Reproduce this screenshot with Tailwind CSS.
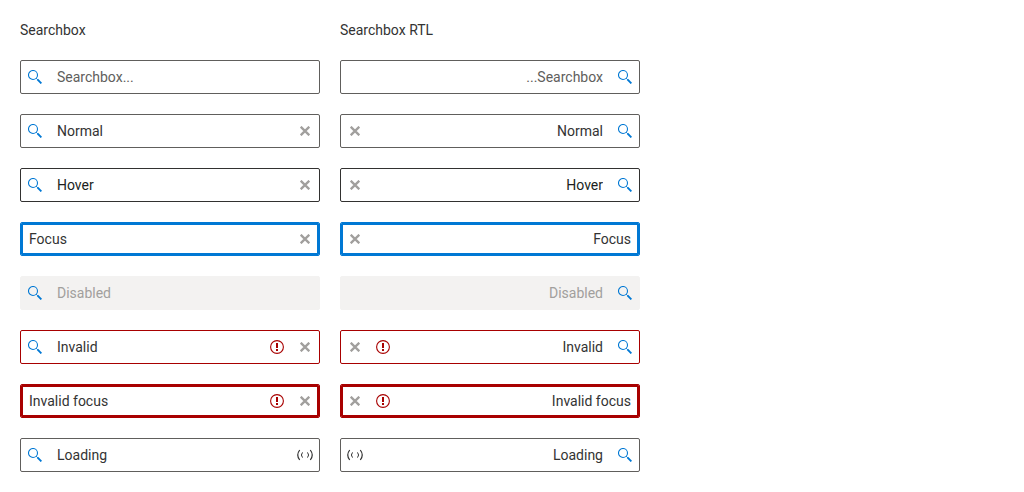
<!DOCTYPE html>
<html lang="en">
<head>
<meta charset="utf-8">
<meta name="viewport" content="width=device-width, initial-scale=1">
<title>Searchbox</title>
<script src="https://cdn.jsdelivr.net/npm/@tailwindcss/browser@4"></script>
</head>
<body class="bg-white font-['Roboto',sans-serif] text-sm text-[#333333]">
<svg class="hidden" aria-hidden="true">
  <symbol id="search" viewBox="0 0 14 14"><circle cx="5" cy="5" r="4.5" fill="none" stroke="currentColor" stroke-width="1.1"/><path d="M8.200 8.200l1.500 1.500" stroke="currentColor" stroke-width="1"/><path d="M9.400 9.400l4 4" stroke="currentColor" stroke-width="1.900"/></symbol>
  <symbol id="clear" viewBox="0 0 10 10"><path d="M.7.7l8.6 8.6M9.3.7L.7 9.3" stroke="currentColor" stroke-width="2.300"/></symbol>
  <symbol id="alert" viewBox="0 0 14 14"><circle cx="7" cy="7" r="6.4" fill="none" stroke="currentColor" stroke-width="1.1"/><path d="M6 3h2v5H6zM6 9h2v2H6z" fill="currentColor"/></symbol>
  <symbol id="loading" viewBox="0 0 18 12"><g fill="none" stroke="currentColor"><path stroke-width="1.200" d="M3.700 1Q-.2 6 3.700 11M14.300 1Q18.200 6 14.300 11"/><path stroke-width="1" d="M6.500 3.400Q4.300 6 6.500 8.600M11.500 3.400Q13.700 6 11.500 8.600"/></g></symbol>
</svg>
<main class="grid max-w-[660px] grid-cols-2 gap-5 p-5">
  <section class="flex flex-col gap-5">
    <h2>Searchbox</h2>
    <div class="flex h-[34px] items-center rounded-[2px] border border-[#605e5c]">
      <span class="flex w-7 shrink-0 justify-center text-[#0078d4]"><svg class="size-3.5"><use href="#search"/></svg></span>
      <input type="text" aria-label="Empty" placeholder="Searchbox..." class="min-w-0 flex-1 px-2 outline-none placeholder:text-[#605e5c]">
    </div>
    <div class="flex h-[34px] items-center rounded-[2px] border border-[#605e5c]">
      <span class="flex w-7 shrink-0 justify-center text-[#0078d4]"><svg class="size-3.5"><use href="#search"/></svg></span>
      <input type="text" aria-label="Normal" value="Normal" class="min-w-0 flex-1 px-2 outline-none">
      <button aria-label="Clear" class="flex w-7 shrink-0 justify-center text-[#a19f9d]"><svg class="size-2.5"><use href="#clear"/></svg></button>
    </div>
    <div class="flex h-[34px] items-center rounded-[2px] border border-[#323130]">
      <span class="flex w-7 shrink-0 justify-center text-[#0078d4]"><svg class="size-3.5"><use href="#search"/></svg></span>
      <input type="text" aria-label="Hover" value="Hover" class="min-w-0 flex-1 px-2 text-[#201f1e] outline-none">
      <button aria-label="Clear" class="flex w-7 shrink-0 justify-center text-[#a19f9d]"><svg class="size-2.5"><use href="#clear"/></svg></button>
    </div>
    <div class="flex h-[34px] items-center rounded-[2px] border border-[#0078d4] inset-ring-2 inset-ring-[#0078d4]">
      <input type="text" aria-label="Focus" value="Focus" class="min-w-0 flex-1 px-2 outline-none">
      <button aria-label="Clear" class="flex w-7 shrink-0 justify-center text-[#a19f9d]"><svg class="size-2.5"><use href="#clear"/></svg></button>
    </div>
    <div class="flex h-[34px] items-center rounded-[2px] border border-[#f3f2f1] bg-[#f3f2f1]">
      <span class="flex w-7 shrink-0 justify-center text-[#0078d4]"><svg class="size-3.5"><use href="#search"/></svg></span>
      <input type="text" disabled aria-label="Disabled" value="Disabled" class="min-w-0 flex-1 px-2 text-[#a19f9d] outline-none">
    </div>
    <div class="flex h-[34px] items-center rounded-[2px] border border-[#a80000]">
      <span class="flex w-7 shrink-0 justify-center text-[#0078d4]"><svg class="size-3.5"><use href="#search"/></svg></span>
      <input type="text" aria-invalid="true" aria-label="Invalid" value="Invalid" class="min-w-0 flex-1 px-2 outline-none">
      <span class="flex w-7 shrink-0 justify-center text-[#a80000]"><svg class="size-3.5"><use href="#alert"/></svg></span>
      <button aria-label="Clear" class="flex w-7 shrink-0 justify-center text-[#a19f9d]"><svg class="size-2.5"><use href="#clear"/></svg></button>
    </div>
    <div class="flex h-[34px] items-center rounded-[2px] border border-[#a80000] inset-ring-2 inset-ring-[#a80000]">
      <input type="text" aria-invalid="true" aria-label="Invalid focus" value="Invalid focus" class="min-w-0 flex-1 px-2 outline-none">
      <span class="flex w-7 shrink-0 justify-center text-[#a80000]"><svg class="size-3.5"><use href="#alert"/></svg></span>
      <button aria-label="Clear" class="flex w-7 shrink-0 justify-center text-[#a19f9d]"><svg class="size-2.5"><use href="#clear"/></svg></button>
    </div>
    <div class="flex h-[34px] items-center rounded-[2px] border border-[#605e5c]">
      <span class="flex w-7 shrink-0 justify-center text-[#0078d4]"><svg class="size-3.5"><use href="#search"/></svg></span>
      <input type="text" aria-label="Loading" value="Loading" class="min-w-0 flex-1 px-2 outline-none">
      <span class="flex w-7 shrink-0 justify-center"><svg class="h-3 w-[18px]"><use href="#loading"/></svg></span>
    </div>
  </section>
  <section class="flex flex-col gap-5">
    <h2>Searchbox RTL</h2>
    <div dir="rtl" class="flex h-[34px] items-center rounded-[2px] border border-[#605e5c]">
      <span class="flex w-7 shrink-0 justify-center text-[#0078d4]"><svg class="size-3.5"><use href="#search"/></svg></span>
      <input type="text" aria-label="Empty" placeholder="Searchbox..." class="min-w-0 flex-1 px-2 outline-none placeholder:text-[#605e5c]">
    </div>
    <div dir="rtl" class="flex h-[34px] items-center rounded-[2px] border border-[#605e5c]">
      <span class="flex w-7 shrink-0 justify-center text-[#0078d4]"><svg class="size-3.5"><use href="#search"/></svg></span>
      <input type="text" aria-label="Normal" value="Normal" class="min-w-0 flex-1 px-2 outline-none">
      <button aria-label="Clear" class="flex w-7 shrink-0 justify-center text-[#a19f9d]"><svg class="size-2.5"><use href="#clear"/></svg></button>
    </div>
    <div dir="rtl" class="flex h-[34px] items-center rounded-[2px] border border-[#323130]">
      <span class="flex w-7 shrink-0 justify-center text-[#0078d4]"><svg class="size-3.5"><use href="#search"/></svg></span>
      <input type="text" aria-label="Hover" value="Hover" class="min-w-0 flex-1 px-2 text-[#201f1e] outline-none">
      <button aria-label="Clear" class="flex w-7 shrink-0 justify-center text-[#a19f9d]"><svg class="size-2.5"><use href="#clear"/></svg></button>
    </div>
    <div dir="rtl" class="flex h-[34px] items-center rounded-[2px] border border-[#0078d4] inset-ring-2 inset-ring-[#0078d4]">
      <input type="text" aria-label="Focus" value="Focus" class="min-w-0 flex-1 px-2 outline-none">
      <button aria-label="Clear" class="flex w-7 shrink-0 justify-center text-[#a19f9d]"><svg class="size-2.5"><use href="#clear"/></svg></button>
    </div>
    <div dir="rtl" class="flex h-[34px] items-center rounded-[2px] border border-[#f3f2f1] bg-[#f3f2f1]">
      <span class="flex w-7 shrink-0 justify-center text-[#0078d4]"><svg class="size-3.5"><use href="#search"/></svg></span>
      <input type="text" disabled aria-label="Disabled" value="Disabled" class="min-w-0 flex-1 px-2 text-[#a19f9d] outline-none">
    </div>
    <div dir="rtl" class="flex h-[34px] items-center rounded-[2px] border border-[#a80000]">
      <span class="flex w-7 shrink-0 justify-center text-[#0078d4]"><svg class="size-3.5"><use href="#search"/></svg></span>
      <input type="text" aria-invalid="true" aria-label="Invalid" value="Invalid" class="min-w-0 flex-1 px-2 outline-none">
      <span class="flex w-7 shrink-0 justify-center text-[#a80000]"><svg class="size-3.5"><use href="#alert"/></svg></span>
      <button aria-label="Clear" class="flex w-7 shrink-0 justify-center text-[#a19f9d]"><svg class="size-2.5"><use href="#clear"/></svg></button>
    </div>
    <div dir="rtl" class="flex h-[34px] items-center rounded-[2px] border border-[#a80000] inset-ring-2 inset-ring-[#a80000]">
      <input type="text" aria-invalid="true" aria-label="Invalid focus" value="Invalid focus" class="min-w-0 flex-1 px-2 outline-none">
      <span class="flex w-7 shrink-0 justify-center text-[#a80000]"><svg class="size-3.5"><use href="#alert"/></svg></span>
      <button aria-label="Clear" class="flex w-7 shrink-0 justify-center text-[#a19f9d]"><svg class="size-2.5"><use href="#clear"/></svg></button>
    </div>
    <div dir="rtl" class="flex h-[34px] items-center rounded-[2px] border border-[#605e5c]">
      <span class="flex w-7 shrink-0 justify-center text-[#0078d4]"><svg class="size-3.5"><use href="#search"/></svg></span>
      <input type="text" aria-label="Loading" value="Loading" class="min-w-0 flex-1 px-2 outline-none">
      <span class="flex w-7 shrink-0 justify-center"><svg class="h-3 w-[18px]"><use href="#loading"/></svg></span>
    </div>
  </section>
</main>
</body>
</html>
